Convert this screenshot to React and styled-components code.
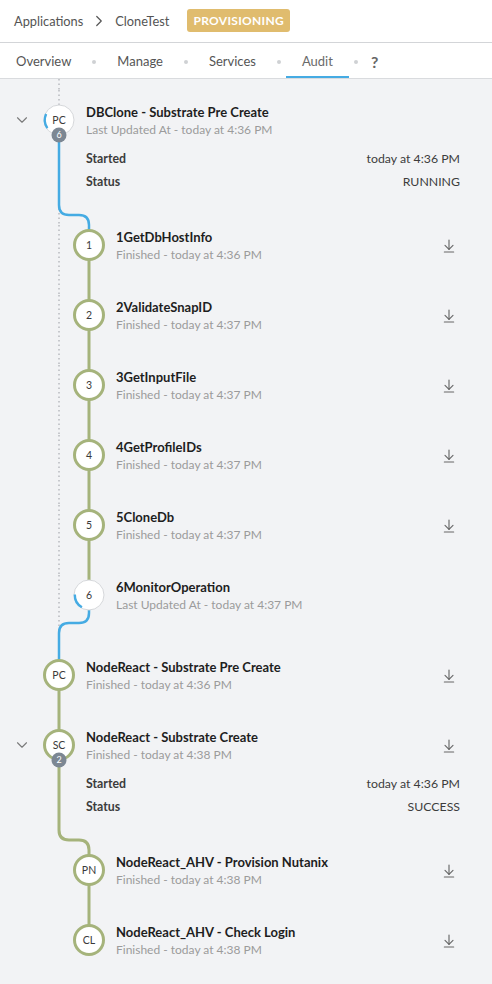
import React from 'react';
import styled, { createGlobalStyle } from 'styled-components';
import { ChevronDown, ChevronRight, ArrowDownToLine } from 'lucide-react';

const GREEN = '#a5b37b';
const BLUE = '#45abe3';
const DOT = '#b8bbbf';
const FONT = 'Lato, "Open Sans", "Liberation Sans", sans-serif';

const GlobalStyle = createGlobalStyle`
  html, body { margin: 0; padding: 0; background: #f2f3f5; }
  body { font-family: ${FONT}; -webkit-font-smoothing: antialiased; }
  * { box-sizing: border-box; }
`;

const Page = styled.div`
  width: 492px;
  min-height: 984px;
  background: #f2f3f5;
  overflow: hidden;
`;

const TopBar = styled.header`
  height: 43px;
  display: flex;
  align-items: center;
  padding: 0 0 1px 14px;
  background: #fff;
  border-bottom: 1px solid #d3d5d8;
`;

const Crumb = styled.span`
  font-size: 12.8px;
  color: #545454;
`;

const CrumbSep = styled.span`
  display: flex;
  align-items: center;
  color: #555;
  margin: 0 7px;
`;

const StatusBadge = styled.span`
  margin-left: 18px;
  height: 23px;
  padding: 0 6px;
  display: inline-flex;
  align-items: center;
  background: #e0bc6e;
  border-radius: 3px;
  color: #fff;
  font-weight: 700;
  font-size: 12px;
  letter-spacing: 0.3px;
`;

const Tabs = styled.nav`
  height: 36px;
  display: flex;
  align-items: stretch;
  background: #fff;
  border-bottom: 1px solid #d9dbde;
`;

const Tab = styled.div`
  display: flex;
  align-items: center;
  padding: 3px 16px 0;
  font-size: 13px;
  color: ${(p) => (p.$active ? '#6a6a6a' : '#555')};
  border-bottom: 2px solid ${(p) => (p.$active ? BLUE : 'transparent')};
`;

const HelpTab = styled(Tab)`
  font-weight: 700;
  font-size: 16px;
  color: #666;
  padding-left: 8px;
`;

const TabDot = styled.span`
  align-self: center;
  width: 4px;
  height: 4px;
  margin: 2px 5px 0;
  border-radius: 50%;
  background: #cfd1d4;
`;

const Timeline = styled.section`
  display: flex;
  flex-direction: column;
`;

const Row = styled.div`
  display: flex;
  height: ${(p) => p.$h}px;
`;

const Gutter = styled.div`
  width: 44px;
  flex: none;
  display: flex;
  justify-content: center;
  padding-top: 21px;
  color: #7a7a7a;
`;

const RailSvg = styled.svg`
  flex: none;
  display: block;
  overflow: visible;
`;

const Body = styled.div`
  flex: 1;
  min-width: 0;
  margin-left: 12px;
  padding: ${(p) => (p.$child ? 3 : 13)}px 32px 0 0;
  display: flex;
  flex-direction: column;
`;

const Head = styled.div`
  display: flex;
  justify-content: space-between;
`;

const TextBlock = styled.div`
  display: flex;
  flex-direction: column;
`;

const Title = styled.div`
  font-size: 13px;
  line-height: 18px;
  font-weight: 700;
  color: #1e1e1e;
  white-space: nowrap;
`;

const Sub = styled.div`
  font-size: 12px;
  line-height: 18px;
  color: #9b9b9b;
  white-space: nowrap;
`;

const IconSlot = styled.div`
  width: 22px;
  height: 36px;
  display: flex;
  align-items: center;
  justify-content: center;
  color: #666;
`;

const Details = styled.div`
  display: flex;
  flex-direction: column;
  gap: 5px;
  margin-top: 11px;
`;

const DetailRow = styled.div`
  display: flex;
  justify-content: space-between;
  font-size: 12.3px;
  line-height: 18px;
  color: #3c3c3c;
`;

const DetailLabel = styled.span`
  font-weight: 700;
`;

function arcPath(cx, cy, r, a1, a2) {
  const rad = (a) => (a * Math.PI) / 180;
  const x1 = cx + r * Math.cos(rad(a1));
  const y1 = cy + r * Math.sin(rad(a1));
  const x2 = cx + r * Math.cos(rad(a2));
  const y2 = cy + r * Math.sin(rad(a2));
  const large = Math.abs(a2 - a1) > 180 ? 1 : 0;
  const sweep = a2 > a1 ? 1 : 0;
  return `M${x1} ${y1} A${r} ${r} 0 ${large} ${sweep} ${x2} ${y2}`;
}

function Node({ cx, cy, label, running, arc, badge }) {
  return (
    <g>
      {running ? (
        <circle cx={cx} cy={cy} r={15} fill="#fff" stroke="#d6d8db" strokeWidth={1} />
      ) : (
        <circle cx={cx} cy={cy} r={14.5} fill="#fff" stroke={GREEN} strokeWidth={3} />
      )}
      {running && arc && (
        <path d={arcPath(cx, cy, 14.2, arc[0], arc[1])} stroke={BLUE} strokeWidth={2.4} fill="none" />
      )}
      <text
        x={cx}
        y={cy + 3.8}
        textAnchor="middle"
        fontSize="10.5"
        fill="#3a3a3a"
        fontFamily={FONT}
      >
        {label}
      </text>
      {badge && (
        <g>
          <circle cx={cx} cy={cy + 15} r={7.5} fill="#7c8793" />
          <text
            x={cx}
            y={cy + 18.3}
            textAnchor="middle"
            fontSize="9"
            fill="#fff"
            fontFamily={FONT}
          >
            {badge}
          </text>
        </g>
      )}
    </g>
  );
}

function Rail({ w, h, dotted, paths = [], node }) {
  return (
    <RailSvg width={w} height={h} viewBox={`0 0 ${w} ${h}`}>
      {dotted && (
        <line
          x1="15"
          y1={dotted[0]}
          x2="15"
          y2={dotted[1]}
          stroke={DOT}
          strokeWidth="1.5"
          strokeDasharray="1.5 3"
        />
      )}
      {paths.map((p, i) => (
        <path
          key={i}
          d={p.d}
          stroke={p.c}
          strokeWidth={p.c === GREEN ? 3 : 2.5}
          fill="none"
        />
      ))}
      {node && <Node {...node} />}
    </RailSvg>
  );
}

const DownloadIcon = () => <ArrowDownToLine size={16} strokeWidth={1.7} />;

function Entry({ child, h, rail, title, sub, download, chevron, details }) {
  return (
    <Row $h={h}>
      <Gutter>{chevron && <ChevronDown size={18} strokeWidth={1.5} />}</Gutter>
      <Rail {...rail} />
      <Body $child={child}>
        <Head>
          <TextBlock>
            <Title>{title}</Title>
            <Sub>{sub}</Sub>
          </TextBlock>
          {download && (
            <IconSlot>
              <DownloadIcon />
            </IconSlot>
          )}
        </Head>
        {details && (
          <Details>
            {details.map(([k, v]) => (
              <DetailRow key={k}>
                <DetailLabel>{k}</DetailLabel>
                <span>{v}</span>
              </DetailRow>
            ))}
          </Details>
        )}
      </Body>
    </Row>
  );
}

function Connector({ h, rail }) {
  return (
    <Row $h={h}>
      <Gutter />
      <Rail {...rail} />
    </Row>
  );
}

const curveIn = 'M15 0 V10 Q15 20 25 20 H35 Q45 20 45 30';

const steps = [
  ['1GetDbHostInfo', 'Finished - today at 4:36 PM'],
  ['2ValidateSnapID', 'Finished - today at 4:37 PM'],
  ['3GetInputFile', 'Finished - today at 4:37 PM'],
  ['4GetProfileIDs', 'Finished - today at 4:37 PM'],
  ['5CloneDb', 'Finished - today at 4:37 PM'],
];

export default function App() {
  return (
    <Page>
      <GlobalStyle />
      <TopBar>
        <Crumb>Applications</Crumb>
        <CrumbSep>
          <ChevronRight size={18} strokeWidth={1.6} />
        </CrumbSep>
        <Crumb>CloneTest</Crumb>
        <StatusBadge>PROVISIONING</StatusBadge>
      </TopBar>
      <Tabs>
        <Tab>Overview</Tab>
        <TabDot />
        <Tab>Manage</Tab>
        <TabDot />
        <Tab>Services</Tab>
        <TabDot />
        <Tab $active>Audit</Tab>
        <TabDot />
        <HelpTab>?</HelpTab>
      </Tabs>

      <Timeline>
        <Connector h={11} rail={{ w: 30, h: 11, dotted: [0, 11] }} />
        <Entry
          h={105}
          chevron
          rail={{
            w: 30,
            h: 105,
            dotted: [0, 105],
            paths: [{ d: 'M15 45 V105', c: BLUE }],
            node: { cx: 15, cy: 30, label: 'PC', running: true, arc: [145, 205], badge: '6' },
          }}
          title="DBClone - Substrate Pre Create"
          sub="Last Updated At - today at 4:36 PM"
          details={[
            ['Started', 'today at 4:36 PM'],
            ['Status', 'RUNNING'],
          ]}
        />
        <Connector h={30} rail={{ w: 60, h: 30, dotted: [0, 30], paths: [{ d: curveIn, c: BLUE }] }} />
        {steps.map(([t, s], i) => (
          <Entry
            key={t}
            child
            h={70}
            rail={{
              w: 60,
              h: 70,
              dotted: [0, 70],
              paths: [
                { d: 'M45 0 V5', c: i === 0 ? BLUE : GREEN },
                { d: 'M45 35 V70', c: GREEN },
              ],
              node: { cx: 45, cy: 20, label: String(i + 1) },
            }}
            title={t}
            sub={s}
            download
          />
        ))}
        <Entry
          child
          h={70}
          rail={{
            w: 60,
            h: 70,
            dotted: [0, 70],
            paths: [
              { d: 'M45 0 V5', c: GREEN },
              { d: 'M45 35 V38 Q45 48 35 48 H25 Q15 48 15 58 V70', c: BLUE },
            ],
            node: { cx: 45, cy: 20, label: '6', running: true, arc: [120, 182] },
          }}
          title="6MonitorOperation"
          sub="Last Updated At - today at 4:37 PM"
        />
        <Entry
          h={70}
          rail={{
            w: 30,
            h: 70,
            paths: [
              { d: 'M15 0 V15', c: BLUE },
              { d: 'M15 45 V70', c: GREEN },
            ],
            node: { cx: 15, cy: 30, label: 'PC' },
          }}
          title="NodeReact - Substrate Pre Create"
          sub="Finished - today at 4:36 PM"
          download
        />
        <Entry
          h={105}
          chevron
          rail={{
            w: 30,
            h: 105,
            paths: [
              { d: 'M15 0 V15', c: GREEN },
              { d: 'M15 45 V105', c: GREEN },
            ],
            node: { cx: 15, cy: 30, label: 'SC', badge: '2' },
          }}
          title="NodeReact - Substrate Create"
          sub="Finished - today at 4:38 PM"
          download
          details={[
            ['Started', 'today at 4:36 PM'],
            ['Status', 'SUCCESS'],
          ]}
        />
        <Connector h={30} rail={{ w: 60, h: 30, paths: [{ d: curveIn, c: GREEN }] }} />
        <Entry
          child
          h={70}
          rail={{
            w: 60,
            h: 70,
            paths: [
              { d: 'M45 0 V5', c: GREEN },
              { d: 'M45 35 V70', c: GREEN },
            ],
            node: { cx: 45, cy: 20, label: 'PN' },
          }}
          title="NodeReact_AHV - Provision Nutanix"
          sub="Finished - today at 4:38 PM"
          download
        />
        <Entry
          child
          h={70}
          rail={{
            w: 60,
            h: 70,
            paths: [{ d: 'M45 0 V5', c: GREEN }],
            node: { cx: 45, cy: 20, label: 'CL' },
          }}
          title="NodeReact_AHV - Check Login"
          sub="Finished - today at 4:38 PM"
          download
        />
      </Timeline>
    </Page>
  );
}
